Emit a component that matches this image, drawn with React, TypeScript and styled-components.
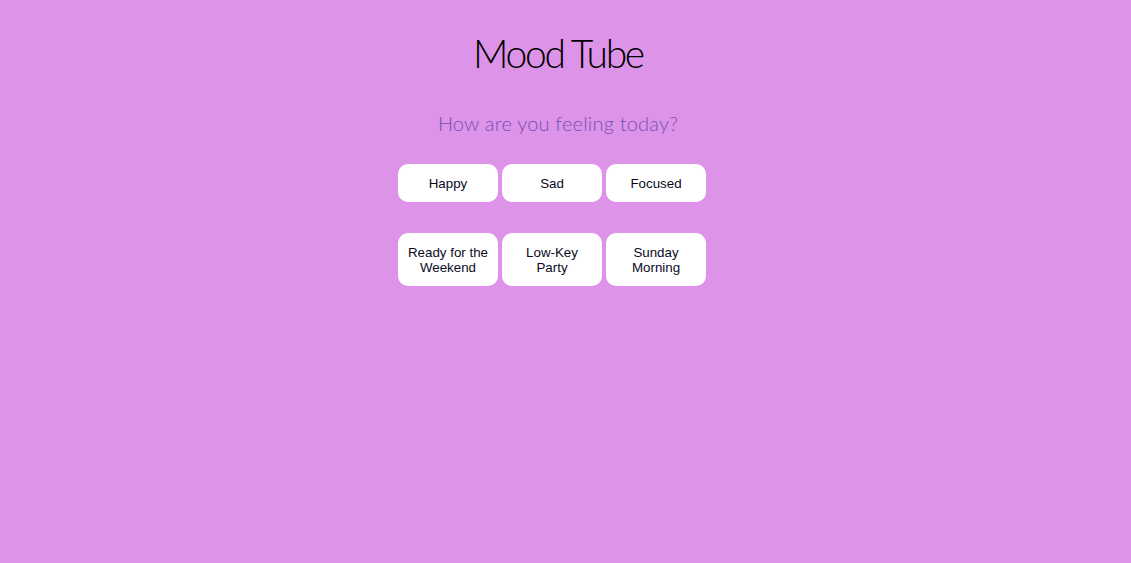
import React from "react";
import styled, { createGlobalStyle } from "styled-components";

const Global = createGlobalStyle`
  html, body { margin: 0; padding: 0; background: #dd94e8; }
  body { font-family: "Liberation Sans", Arial, sans-serif; }
`;

const Page = styled.main`
  min-height: 563px;
  display: flex;
  flex-direction: column;
  align-items: center;
  padding: 28px 15px 0 0;
  box-sizing: border-box;
`;

const Title = styled.h1`
  margin: 0;
  font-family: Lato, sans-serif;
  font-weight: 300;
  font-size: 39px;
  line-height: 50px;
  color: #000;
  letter-spacing: -2.3px;
`;

const Subtitle = styled.h2`
  margin: 32px 0 0;
  font-family: Lato, sans-serif;
  font-weight: 300;
  font-size: 20px;
  line-height: 26px;
  color: #7650b4;
  letter-spacing: 0.2px;
`;

const Grid = styled.div`
  margin: 28px 12px 0 0;
  display: grid;
  grid-template-columns: repeat(3, 100px);
  column-gap: 4px;
  row-gap: 31px;
`;

const MoodButton = styled.button<{ $tall?: boolean }>`
  height: ${(p) => (p.$tall ? "53px" : "38px")};
  border: none;
  border-radius: 10px;
  background: #fff;
  font-family: "Liberation Sans", Arial, sans-serif;
  font-size: 13.333px;
  line-height: 15px;
  color: #0a0a1e;
  padding: 0 8px;
  cursor: pointer;
`;

const rows = [
  ["Happy", "Sad", "Focused"],
  ["Ready for the Weekend", "Low-Key Party", "Sunday Morning"],
];

export default function App() {
  return (
    <>
      <Global />
      <Page>
        <Title>Mood Tube</Title>
        <Subtitle>How are you feeling today?</Subtitle>
        <Grid>
          {rows.map((row, i) =>
            row.map((m) => (
              <MoodButton key={m} $tall={i === 1}>
                {m}
              </MoodButton>
            ))
          )}
        </Grid>
      </Page>
    </>
  );
}
